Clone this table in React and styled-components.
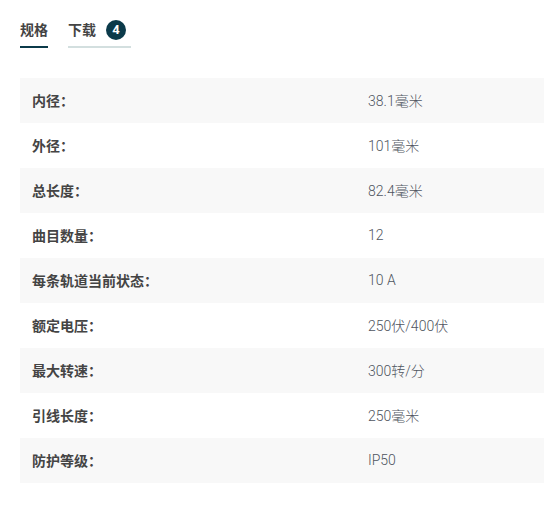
import styled, { createGlobalStyle } from "styled-components";

const specs = [
  ["内径：", "38.1毫米"],
  ["外径：", "101毫米"],
  ["总长度：", "82.4毫米"],
  ["曲目数量：", "12"],
  ["每条轨道当前状态：", "10 A"],
  ["额定电压：", "250伏/400伏"],
  ["最大转速：", "300转/分"],
  ["引线长度：", "250毫米"],
  ["防护等级：", "IP50"],
];

const App = () => {
  return (
    <StPage>
      <GlobalStyle />
      <StTabs>
        <StTab $active>规格</StTab>
        <StTab>
          下载
          <StBadge>4</StBadge>
        </StTab>
      </StTabs>
      <StTable>
        {specs.map(([label, value], i) => (
          <StRow key={label} $striped={i % 2 === 0}>
            <StLabel>{label}</StLabel>
            <StValue>{value}</StValue>
          </StRow>
        ))}
      </StTable>
    </StPage>
  );
};

export default App;

const GlobalStyle = createGlobalStyle`
  body {
    margin: 0;
    background: #fff;
    font-family: Roboto, "Noto Sans CJK SC", sans-serif;
  }
`;

const StPage = styled.div`
  padding: 20px 0 0 20px;
  overflow: hidden;
`;

const StTabs = styled.div`
  display: flex;
  gap: 20px;
`;

const StTab = styled.div`
  display: flex;
  align-items: center;
  gap: 10px;
  height: 20px;
  line-height: 20px;
  padding-bottom: 6px;
  font-size: 14px;
  font-weight: 700;
  color: #444;
  border-bottom: 2px solid ${(p) => (p.$active ? "#0b3a4a" : "#d3dfdf")};
`;

const StBadge = styled.span`
  display: flex;
  align-items: center;
  justify-content: center;
  width: 20px;
  height: 20px;
  border-radius: 50%;
  background: #0b3a4a;
  color: #fff;
  font-size: 13px;
  font-weight: 700;
  margin-right: 5px;
`;

const StTable = styled.div`
  margin-top: 30px;
`;

const StRow = styled.div`
  display: grid;
  grid-template-columns: 336px 1fr;
  height: 45px;
  align-items: center;
  background: ${(p) => (p.$striped ? "#f8f8f8" : "#fff")};
`;

const StLabel = styled.div`
  padding-left: 12px;
  padding-bottom: 2px;
  font-size: 14px;
  font-weight: 700;
  color: #444;
`;

const StValue = styled.div`
  padding-left: 12px;
  padding-bottom: 2px;
  font-size: 14px;
  font-weight: 300;
  color: #4f5560;
`;
